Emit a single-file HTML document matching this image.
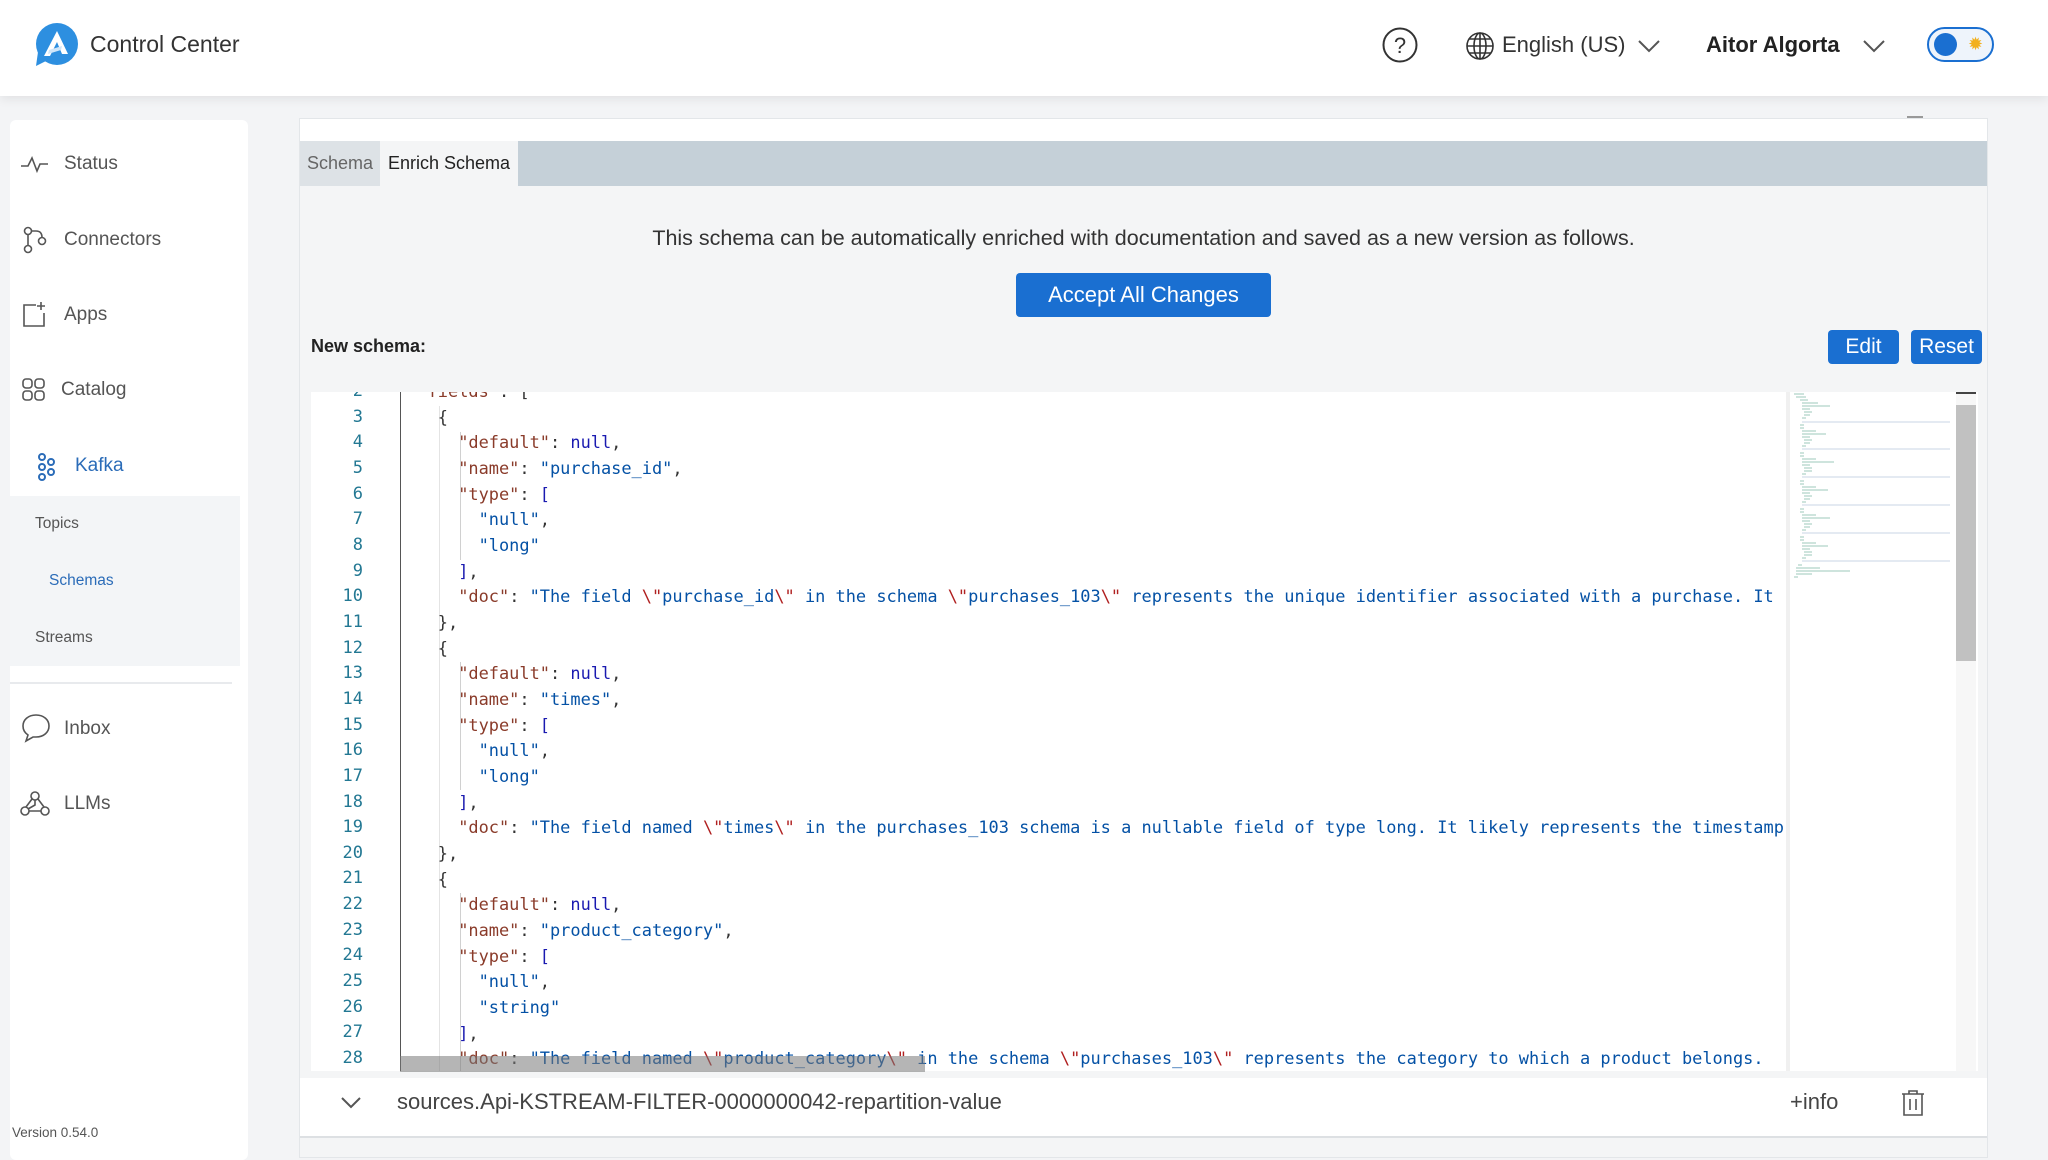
<!DOCTYPE html>
<html><head><meta charset="utf-8">
<style>
*{box-sizing:border-box;margin:0;padding:0}
body{width:2048px;height:1152px;overflow:hidden;background:#f3f4f6;font-family:"Liberation Sans",sans-serif;color:#333;position:relative}
.abs{position:absolute}
.hdr{left:0;top:0;width:2048px;height:96px;background:#fff;box-shadow:0 3px 10px rgba(0,0,0,.08);z-index:5}
.side{left:10px;top:120px;width:238px;height:1040px;background:#fff;border-radius:6px}
.nav{position:absolute;font-size:19px;color:#555;white-space:nowrap}
.sub{font-size:15.5px;color:#555;position:absolute}
.card{left:299px;top:118px;width:1689px;height:1040px;background:#f4f5f6;border:1px solid #e3e6e9}
.code{font-family:"DejaVu Sans Mono","Liberation Mono",monospace;font-size:16.95px;white-space:pre;position:absolute;left:-4px;height:25.65px;line-height:25.65px}
.ln{position:absolute;left:0;width:52px;text-align:right;font-family:"DejaVu Sans Mono",monospace;font-size:17px;color:#237893;line-height:25.65px}
.k{color:#8a3b2a}.s{color:#0451a5}.n{color:#1a1ab0}.p{color:#333}.e{color:#b02020}
.btn{background:#1a6fd1;color:#fff;border-radius:4px;text-align:center}
</style></head><body>

<div class="abs hdr">
  <svg class="abs" style="left:32px;top:22px" width="50" height="48" viewBox="0 0 50 48">
    <circle cx="25" cy="22" r="21" fill="#2d8fe0"/>
    <path d="M6 30 L4 44 L16 38 Z" fill="#2d8fe0"/>
    <path d="M12 34 L25 9 L36 32 L30 32 L25 20 L18 34 Z" fill="#fff"/>
    <path d="M17 28 L30 24 L29 28 L16 32Z" fill="#cfe6fa"/>
  </svg>
  <div class="abs" style="left:90px;top:31px;font-size:23px;color:#333">Control Center</div>
  <svg class="abs" style="left:1381px;top:26px" width="38" height="38" viewBox="0 0 38 38"><circle cx="19" cy="19" r="16.5" fill="none" stroke="#333" stroke-width="2"/><text x="19" y="27" text-anchor="middle" font-size="22" font-family="Liberation Sans" fill="#333">?</text></svg>
  <svg class="abs" style="left:1465px;top:31px" width="30" height="30" viewBox="0 0 30 30" fill="none" stroke="#333" stroke-width="1.6"><circle cx="15" cy="15" r="13"/><ellipse cx="15" cy="15" rx="6" ry="13"/><path d="M2 15H28M4 8H26M4 22H26M15 2V28"/></svg>
  <div class="abs" style="left:1502px;top:32px;font-size:22px;color:#333">English (US)</div>
  <svg class="abs" style="left:1637px;top:39px" width="24" height="14" viewBox="0 0 24 14"><path d="M2 2L12 12L22 2" fill="none" stroke="#555" stroke-width="2"/></svg>
  <div class="abs" style="left:1706px;top:32px;font-size:22px;font-weight:bold;color:#222">Aitor Algorta</div>
  <svg class="abs" style="left:1862px;top:39px" width="24" height="14" viewBox="0 0 24 14"><path d="M2 2L12 12L22 2" fill="none" stroke="#555" stroke-width="2"/></svg>
  <div class="abs" style="left:1927px;top:27px;width:67px;height:35px;border:2px solid #1a6fd1;border-radius:18px;background:#eef4fb"></div>
  <div class="abs" style="left:1934px;top:33px;width:23px;height:23px;border-radius:50%;background:#1a6fd1"></div>
  <div class="abs" style="left:1968px;top:34px;font-size:18px;color:#f2b01e">✹</div>
</div>

<div class="abs side"></div>
<svg class="abs" style="left:20px;top:154px" width="30" height="22" viewBox="0 0 30 22" fill="none" stroke="#555" stroke-width="1.6"><path d="M1 12H8L12 4L17 17L20 10H28"/></svg>
<div class="nav" style="left:64px;top:153px">Status</div>
<svg class="abs" style="left:22px;top:226px" width="26" height="28" viewBox="0 0 26 28" fill="none" stroke="#555" stroke-width="1.6"><circle cx="6" cy="5" r="3.5"/><circle cx="6" cy="23" r="3.5"/><circle cx="20" cy="15" r="3.5"/><path d="M6 8.5V19.5M9 5H14Q20 5 20 11.5"/></svg>
<div class="nav" style="left:64px;top:229px">Connectors</div>
<svg class="abs" style="left:22px;top:300px" width="26" height="28" viewBox="0 0 26 28" fill="none" stroke="#555" stroke-width="1.6"><path d="M14 5H2V26H22V13M19 2V10M15 6H23"/></svg>
<div class="nav" style="left:64px;top:304px">Apps</div>
<svg class="abs" style="left:21px;top:377px" width="26" height="26" viewBox="0 0 26 26" fill="none" stroke="#555" stroke-width="1.6"><rect x="2" y="2" width="9" height="9" rx="3"/><rect x="14" y="2" width="9" height="9" rx="3"/><rect x="2" y="14" width="9" height="9" rx="3"/><rect x="14" y="14" width="9" height="9" rx="3"/></svg>
<div class="nav" style="left:61px;top:379px">Catalog</div>
<svg class="abs" style="left:36px;top:453px" width="20" height="28" viewBox="0 0 20 28" fill="none" stroke="#2b6cb8" stroke-width="2"><circle cx="6" cy="4" r="3"/><circle cx="6" cy="14" r="3"/><circle cx="6" cy="24" r="3"/><circle cx="15" cy="9" r="3"/><circle cx="15" cy="19" r="3"/></svg>
<div class="nav" style="left:75px;top:455px;color:#2b6cb8">Kafka</div>
<div class="abs" style="left:10px;top:496px;width:230px;height:170px;background:#f3f5f7"></div>
<div class="sub" style="left:35px;top:515px">Topics</div>
<div class="sub" style="left:49px;top:572px;color:#2b6cb8">Schemas</div>
<div class="sub" style="left:35px;top:629px">Streams</div>
<div class="abs" style="left:10px;top:682px;width:222px;height:2px;background:#e8eaed"></div>
<svg class="abs" style="left:20px;top:713px" width="32" height="30" viewBox="0 0 32 30" fill="none" stroke="#555" stroke-width="1.6"><path d="M16 2C8 2 3 7 3 13C3 17 5 20 8 22L6 28L13 24C14 24 15 24 16 24C24 24 29 19 29 13C29 7 24 2 16 2Z"/></svg>
<div class="nav" style="left:64px;top:718px">Inbox</div>
<svg class="abs" style="left:19px;top:790px" width="32" height="28" viewBox="0 0 32 28" fill="none" stroke="#555" stroke-width="1.6"><circle cx="16" cy="6" r="4"/><circle cx="6" cy="21" r="4"/><circle cx="26" cy="21" r="4"/><path d="M13 9L7 17M19 9L25 17M10 21H22M16 10V15L9 19"/></svg>
<div class="nav" style="left:64px;top:793px">LLMs</div>
<div class="abs" style="left:12px;top:1125px;font-size:13.5px;color:#555">Version 0.54.0</div>

<div class="abs card"></div>
<div class="abs" style="left:300px;top:119px;width:1687px;height:22px;background:#fff"></div>
<div class="abs" style="left:1907px;top:116px;width:16px;height:2px;background:#999"></div>
<div class="abs" style="left:300px;top:141px;width:1687px;height:45px;background:#c5d0d8"></div>
<div class="abs" style="left:300px;top:141px;width:80px;height:45px;background:#dde2e6;font-size:18px;color:#666;line-height:45px;text-align:center">Schema</div>
<div class="abs" style="left:380px;top:141px;width:138px;height:45px;background:#f4f5f6;font-size:18px;color:#222;line-height:45px;text-align:center">Enrich Schema</div>
<div class="abs" style="left:300px;top:226px;width:1687px;text-align:center;font-size:21.5px;color:#333">This schema can be automatically enriched with documentation and saved as a new version as follows.</div>
<div class="abs btn" style="left:1016px;top:273px;width:255px;height:44px;line-height:44px;font-size:22px">Accept All Changes</div>
<div class="abs" style="left:311px;top:336px;font-size:18px;font-weight:bold;color:#222">New schema:</div>
<div class="abs btn" style="left:1828px;top:330px;width:71px;height:34px;line-height:34px;font-size:21px">Edit</div>
<div class="abs btn" style="left:1911px;top:330px;width:71px;height:34px;line-height:34px;font-size:21px">Reset</div>

<!-- editor -->
<div class="abs" style="left:311px;top:392px;width:1667px;height:679px;background:#fff;overflow:hidden">
  <div class="ln" style="top:-13px">2<br>3<br>4<br>5<br>6<br>7<br>8<br>9<br>10<br>11<br>12<br>13<br>14<br>15<br>16<br>17<br>18<br>19<br>20<br>21<br>22<br>23<br>24<br>25<br>26<br>27<br>28</div>
</div>
<div class="abs" style="left:400px;top:392px;width:1px;height:679px;background:#555"></div>

<div class="abs" style="left:401px;top:392px;width:1384px;height:679px;overflow:hidden">
<div class="abs" style="left:38px;top:14px;width:1px;height:670px;background:#e4e4e4"></div>
<div class="abs" style="left:59px;top:40px;width:1px;height:128px;background:#d0d0d0"></div>
<div class="abs" style="left:59px;top:270px;width:1px;height:128px;background:#d0d0d0"></div>
<div class="abs" style="left:59px;top:501px;width:1px;height:178px;background:#d0d0d0"></div>
<div class="code" style="top:-13px">  <span class="k">"fields"</span><span class="p">: [</span></div>
<div class="code" style="top:13px"><span class="p">    {</span></div>
<div class="code" style="top:38px">      <span class="k">"default"</span><span class="p">: </span><span class="n">null</span><span class="p">,</span></div>
<div class="code" style="top:64px">      <span class="k">"name"</span><span class="p">: </span><span class="s">"purchase_id"</span><span class="p">,</span></div>
<div class="code" style="top:90px">      <span class="k">"type"</span><span class="p">: </span><span class="n">[</span></div>
<div class="code" style="top:115px">        <span class="s">"null"</span><span class="p">,</span></div>
<div class="code" style="top:141px">        <span class="s">"long"</span></div>
<div class="code" style="top:167px">      <span class="n">]</span><span class="p">,</span></div>
<div class="code" style="top:192px">      <span class="k">"doc"</span><span class="p">: </span><span class="s">"The field </span><span class="e">\"</span><span class="s">purchase_id</span><span class="e">\"</span><span class="s"> in the schema </span><span class="e">\"</span><span class="s">purchases_103</span><span class="e">\"</span><span class="s"> represents the unique identifier associated with a purchase. It serves</span></div>
<div class="code" style="top:218px"><span class="p">    },</span></div>
<div class="code" style="top:244px"><span class="p">    {</span></div>
<div class="code" style="top:269px">      <span class="k">"default"</span><span class="p">: </span><span class="n">null</span><span class="p">,</span></div>
<div class="code" style="top:295px">      <span class="k">"name"</span><span class="p">: </span><span class="s">"times"</span><span class="p">,</span></div>
<div class="code" style="top:321px">      <span class="k">"type"</span><span class="p">: </span><span class="n">[</span></div>
<div class="code" style="top:346px">        <span class="s">"null"</span><span class="p">,</span></div>
<div class="code" style="top:372px">        <span class="s">"long"</span></div>
<div class="code" style="top:398px">      <span class="n">]</span><span class="p">,</span></div>
<div class="code" style="top:423px">      <span class="k">"doc"</span><span class="p">: </span><span class="s">"The field named </span><span class="e">\"</span><span class="s">times</span><span class="e">\"</span><span class="s"> in the purchases_103 schema is a nullable field of type long. It likely represents the timestamp</span></div>
<div class="code" style="top:449px"><span class="p">    },</span></div>
<div class="code" style="top:475px"><span class="p">    {</span></div>
<div class="code" style="top:500px">      <span class="k">"default"</span><span class="p">: </span><span class="n">null</span><span class="p">,</span></div>
<div class="code" style="top:526px">      <span class="k">"name"</span><span class="p">: </span><span class="s">"product_category"</span><span class="p">,</span></div>
<div class="code" style="top:552px">      <span class="k">"type"</span><span class="p">: </span><span class="n">[</span></div>
<div class="code" style="top:577px">        <span class="s">"null"</span><span class="p">,</span></div>
<div class="code" style="top:603px">        <span class="s">"string"</span></div>
<div class="code" style="top:629px">      <span class="n">]</span><span class="p">,</span></div>
<div class="code" style="top:654px">      <span class="k">"doc"</span><span class="p">: </span><span class="s">"The field named </span><span class="e">\"</span><span class="s">product_category</span><span class="e">\"</span><span class="s"> in the schema </span><span class="e">\"</span><span class="s">purchases_103</span><span class="e">\"</span><span class="s"> represents the category to which a product belongs.</span></div>
</div>
<div class="abs" style="left:400px;top:1056px;width:525px;height:16px;background:rgba(120,120,120,.55)"></div>

<!-- minimap -->
<div class="abs" style="left:1786px;top:392px;width:4px;height:679px;background:#f0f0f0"></div>
<svg class="abs" style="left:1790px;top:392px" width="166" height="200" viewBox="0 0 166 200" opacity=".45">
<g stroke-width="1">
<path d="M4 2H14M6 5H16" stroke="#2a8a6a"/>
<path d="M10 8H18M12 11H28M12 14H40M12 17H20M14 20H22M14 23H20M12 26H16" stroke="#2a8a6a"/>
<path d="M12 30H160" stroke="#8aa6c8"/>
<path d="M10 33H14M10 36H14M12 39H26M12 42H36M12 45H20M14 48H22M14 51H20M12 54H16" stroke="#2a8a6a"/>
<path d="M12 57H160" stroke="#8aa6c8"/>
<path d="M10 61H14M10 64H14M12 67H26M12 70H44M12 73H20M14 76H22M14 79H22M12 82H16" stroke="#2a8a6a"/>
<path d="M12 85H160" stroke="#8aa6c8"/>
<path d="M10 89H14M10 92H14M12 95H26M12 98H38M12 101H20M14 104H22M14 107H20M12 110H16" stroke="#2a8a6a"/>
<path d="M12 113H160" stroke="#8aa6c8"/>
<path d="M10 117H14M10 120H14M12 123H26M12 126H40M12 129H20M14 132H22M14 135H20M12 138H16" stroke="#2a8a6a"/>
<path d="M12 141H160" stroke="#8aa6c8"/>
<path d="M10 145H14M10 148H14M12 151H26M12 154H38M12 157H20M14 160H22M14 163H22M12 166H16" stroke="#2a8a6a"/>
<path d="M12 169H160" stroke="#8aa6c8"/>
<path d="M8 173H12M6 176H30M6 179H60M6 182H22M4 185H8" stroke="#2a8a6a"/>
</g></svg>
<div class="abs" style="left:1956px;top:392px;width:20px;height:679px;background:#f7f7f7"></div>
<div class="abs" style="left:1956px;top:392px;width:20px;height:2px;background:#444"></div>
<div class="abs" style="left:1956px;top:405px;width:20px;height:256px;background:#c1c1c1"></div>

<!-- bottom row -->
<div class="abs" style="left:300px;top:1078px;width:1687px;height:58px;background:#fff"></div>
<svg class="abs" style="left:340px;top:1096px" width="22" height="14" viewBox="0 0 22 14"><path d="M2 2L11 11L20 2" fill="none" stroke="#555" stroke-width="2"/></svg>
<div class="abs" style="left:397px;top:1089px;font-size:22px;color:#444">sources.Api-KSTREAM-FILTER-0000000042-repartition-value</div>
<div class="abs" style="left:1790px;top:1089px;font-size:22px;color:#444">+info</div>
<svg class="abs" style="left:1900px;top:1089px" width="26" height="28" viewBox="0 0 26 28" fill="none" stroke="#555" stroke-width="1.6"><path d="M2 5H24M9 5V2H17V5M4 5V26H22V5M10 10V21M16 10V21"/></svg>
<div class="abs" style="left:300px;top:1136px;width:1687px;height:2px;background:#dde0e3"></div>
</body></html>
